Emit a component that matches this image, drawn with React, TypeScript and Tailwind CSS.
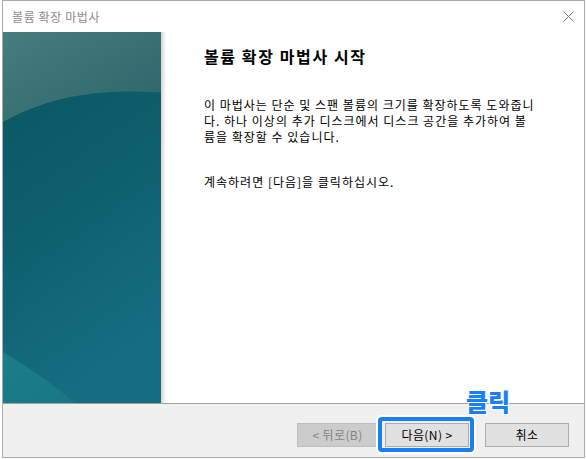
import React from "react";

const font = { fontFamily: '"Noto Sans CJK KR", "Noto Sans", sans-serif' };

function PanelArt() {
  return (
    <svg width="158" height="371" viewBox="0 0 158 371" className="block">
      <defs>
        <linearGradient id="top" x1="0" y1="0" x2="1" y2="1">
          <stop offset="0" stopColor="#467e7e" />
          <stop offset="1" stopColor="#2b646a" />
        </linearGradient>
        <linearGradient id="main" x1="0" y1="0" x2="0.3" y2="1">
          <stop offset="0" stopColor="#0b5560" />
          <stop offset="0.5" stopColor="#0e5e6c" />
          <stop offset="1" stopColor="#156d82" />
        </linearGradient>
        <linearGradient id="swoosh" x1="0" y1="0" x2="1" y2="1">
          <stop offset="0" stopColor="#1c7e87" />
          <stop offset="1" stopColor="#177885" />
        </linearGradient>
      </defs>
      <rect x="0" y="0" width="158" height="371" fill="url(#main)" />
      <path d="M0 0 H158 V60 C120 58 60 56 0 90 Z" fill="url(#top)" />
      <path d="M0 89 C60 56 120 58 158 60" stroke="#3a7879" strokeWidth="1" fill="none" opacity="0.6" />
      <path d="M0 320 C25 335 50 352 72 371 H0 Z" fill="url(#swoosh)" />
    </svg>
  );
}

function Btn({ children, disabled, w }: { children: React.ReactNode; disabled?: boolean; w: string }) {
  return (
    <div
      className={
        "h-[24px] flex items-center justify-center text-[12px] tracking-[0.4px] border " +
        w +
        (disabled ? " bg-[#cccccc] border-[#bfbfbf] text-[#838383]" : " bg-[#e1e1e1] border-[#adadad] text-black")
      }
    >
      {children}
    </div>
  );
}

export default function App() {
  return (
    <div className="relative w-[586px] h-[459px] bg-white" style={font}>
      <div className="ml-[2px] w-[583px] h-[458px] border border-[#ababab] bg-white flex flex-col">
        {/* title bar */}
        <div className="h-[31px] flex items-center justify-between pl-[9px] pr-[10px]">
          <span className="text-[12px] tracking-[0.6px] text-[#8c8c8c]">볼륨 확장 마법사</span>
          <svg width="11" height="11" viewBox="0 0 11 11">
            <path d="M0.5 0.5 L10.5 10.5 M10.5 0.5 L0.5 10.5" stroke="#7a7a7a" strokeWidth="1" />
          </svg>
        </div>
        {/* main */}
        <div className="h-[371px] flex">
          <div className="w-[158px] h-[371px] shrink-0">
            <PanelArt />
          </div>
          <div className="w-[5px] h-full bg-[linear-gradient(to_right,#d2d2d2,#ffffff)]" />
          <div className="flex-1 pl-[38px] pt-[13px] text-black">
            <div className="text-[16px] font-bold leading-[22px] tracking-[1.6px]">볼륨 확장 마법사 시작</div>
            <div className="mt-[30px] text-[12px] leading-[16px] tracking-[1px] whitespace-nowrap">
              이 마법사는 단순 및 스팬 볼륨의 크기를 확장하도록 도와줍니
              <br />
              다. 하나 이상의 추가 디스크에서 디스크 공간을 추가하여 볼
              <br />
              륨을 확장할 수 있습니다.
            </div>
            <div className="mt-[29px] text-[12px] leading-[16px] tracking-[1px]">계속하려면 [다음]을 클릭하십시오.</div>
          </div>
        </div>
        {/* footer */}
        <div className="flex-1 border-t border-[#a0a0a0] bg-[#f0f0f0] flex items-start justify-end pt-[19px] pr-[15px]">
          <Btn disabled w="w-[81px]">&lt; 뒤로(B)</Btn>
          <div className="w-[7px]" />
          <Btn w="w-[84px]">다음(N) &gt;</Btn>
          <div className="w-[16px]" />
          <Btn w="w-[84px]">취소</Btn>
        </div>
      </div>
      {/* annotation */}
      <div className="absolute left-[376px] top-[415px] w-[100px] h-[39px] rounded-[5px] border-[2px] border-white">
        <div className="w-full h-full rounded-[4px] border-[4px] border-[#1a7ff0]" />
      </div>
      <div className="absolute left-[466px] top-[385px] text-[24px] font-black leading-[32px] text-[#1a7ff0] [text-shadow:0_0_2px_#fff,1px_1px_0_#fff,-1px_-1px_0_#fff,1px_-1px_0_#fff,-1px_1px_0_#fff]">
        클릭
      </div>
    </div>
  );
}
